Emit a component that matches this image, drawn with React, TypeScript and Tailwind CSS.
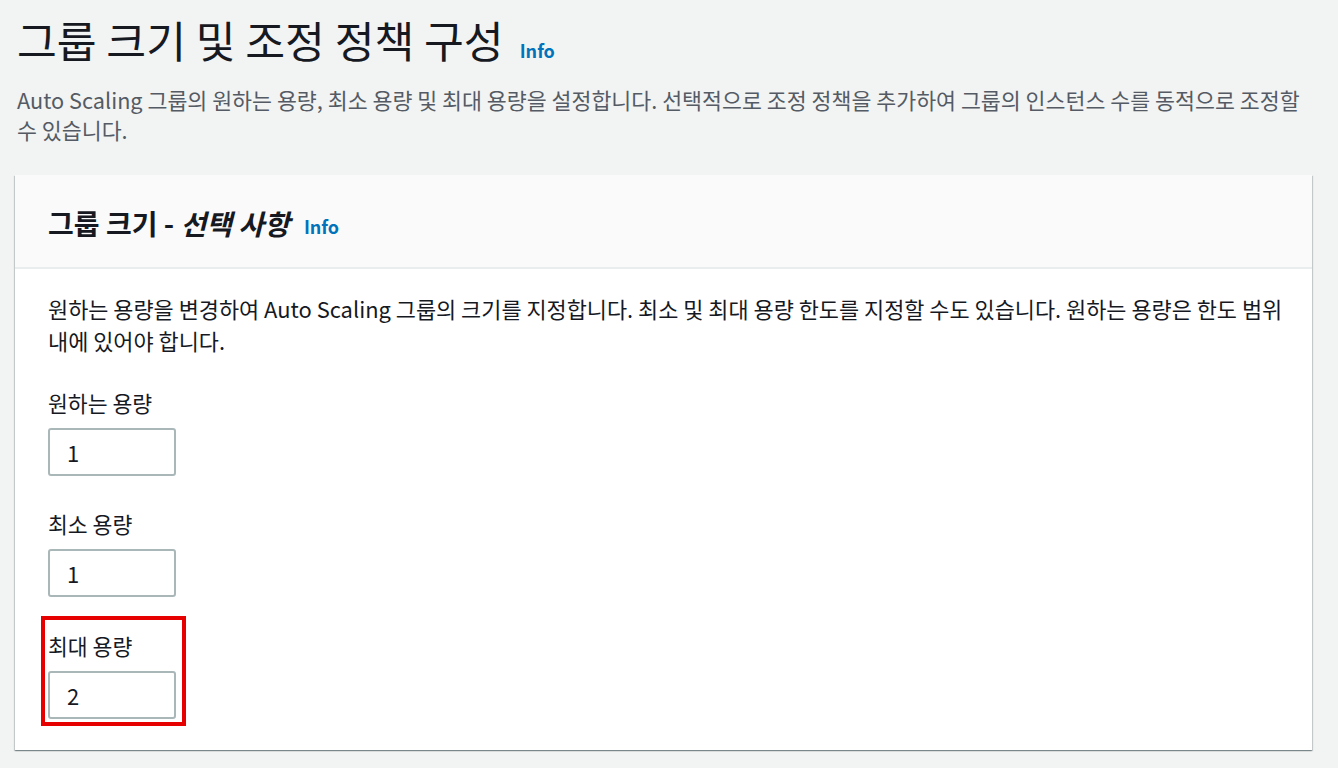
import React from "react";

const font = "font-['Noto_Sans_CJK_KR','Noto_Sans',sans-serif]";

// Numeric field with a label above it
const Field = ({ label, value }: { label: string; value: string }) => (
  <div className="flex flex-col">
    <label className="text-[21.6px] leading-[30px] text-[#16191f]">{label}</label>
    <div className="mt-[10px] w-[128px] h-[48px] border-2 border-[#aab7b8] rounded-[3px] bg-white flex items-center pl-[17px] text-[22px] text-[#16191f]">
      {value}
    </div>
  </div>
);

export default function App() {
  return (
    <div className={`${font} min-h-[768px] bg-[#f2f3f3] pl-[15px] pt-[10px] pb-[20px] break-keep`}>
      {/* Page heading */}
      <div className="flex items-baseline gap-[16px] pl-[2px]">
        <h1 className="text-[43.3px] leading-[58px] font-normal text-[#16191f]">
          그룹 크기 및 조정 정책 구성
        </h1>
        <a href="#" className="text-[18px] font-bold text-[#0073bb]">
          Info
        </a>
      </div>
      <p className="mt-[17px] pl-[2px] w-[1305px] text-[21.7px] leading-[30px] text-[#545b64]">
        Auto Scaling 그룹의 원하는 용량, 최소 용량 및 최대 용량을 설정합니다. 선택적으로 조정 정책을 추가하여 그룹의 인스턴스 수를 동적으로 조정할 수 있습니다.
      </p>

      {/* Card */}
      <div className="mt-[30px] w-[1297px] bg-white shadow-[0_1px_1px_0_rgba(0,28,36,0.3),1px_1px_1px_0_rgba(0,28,36,0.15),-1px_1px_1px_0_rgba(0,28,36,0.15)]">
        <div className="h-[94px] bg-[#fafafa] border-b-2 border-[#eaeded] flex items-center pl-[33px] pt-[4px]">
          <h2 className="text-[28px] font-bold text-[#16191f]">
            그룹 크기 - <i>선택 사항</i>
          </h2>
          <a href="#" className="ml-[14px] mt-[6px] text-[18px] font-bold text-[#0073bb]">
            Info
          </a>
        </div>
        <div className="pl-[33px] pr-[17px] pt-[24px] pb-[24px]">
          <p className="text-[21.9px] leading-[32px] text-[#16191f]">
            원하는 용량을 변경하여 Auto Scaling 그룹의 크기를 지정합니다. 최소 및 최대 용량 한도를 지정할 수도 있습니다. 원하는 용량은 한도 범위 내에 있어야 합니다.
          </p>
          <div className="mt-[31px] flex flex-col items-start">
            <Field label="원하는 용량" value="1" />
            <div className="mt-[33px]">
              <Field label="최소 용량" value="1" />
            </div>
            <div className="mt-[19px] -ml-[7px] border-4 border-[#e60000] pl-[3px] pr-[6px] pt-[11px] pb-[3px]">
              <Field label="최대 용량" value="2" />
            </div>
          </div>
        </div>
      </div>
    </div>
  );
}
